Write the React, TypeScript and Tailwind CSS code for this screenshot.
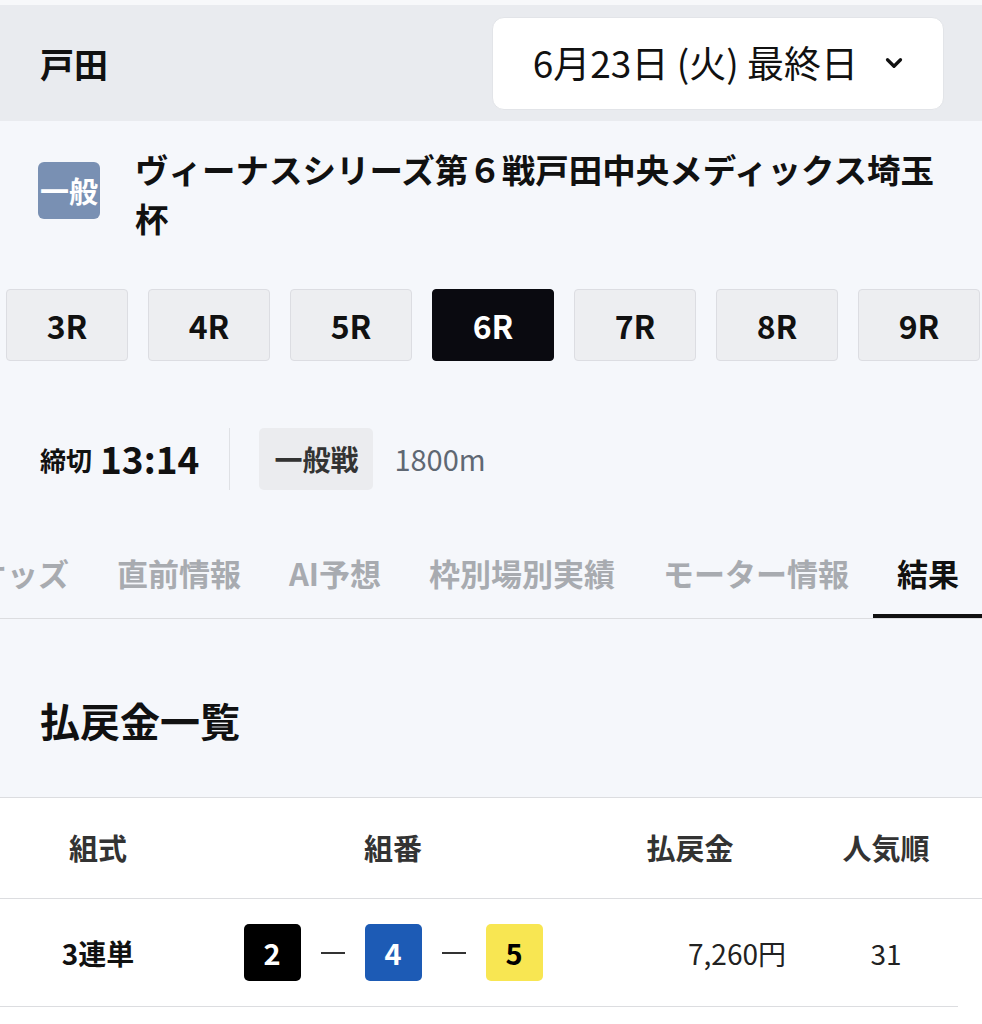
import { ChevronDown } from 'lucide-react'

const font = { fontFamily: '"Noto Sans CJK JP", "Noto Sans", sans-serif' }

const RACES = ['3R', '4R', '5R', '6R', '7R', '8R', '9R']
const TABS = ['オッズ', '直前情報', 'AI予想', '枠別場別実績', 'モーター情報', '結果']

function Boat({ n, cls }: { n: number; cls: string }) {
  return (
    <span className={`flex h-[57px] w-[57px] items-center justify-center rounded-[5px] text-[29px] font-bold ${cls}`}>
      {n}
    </span>
  )
}

function Dash() {
  return <span className="h-[2px] w-[24px] bg-[#333]" />
}

export default function App() {
  return (
    <div style={font} className="min-h-[1024px] w-[982px] overflow-hidden bg-[#f5f7fb] text-[#111]">
      <div className="h-[5px] bg-[#f7f8fa]" />

      <header className="flex h-[116px] items-center justify-between bg-[#e9ebef] pl-[40px] pr-[38px]">
        <h1 className="text-[34px] font-bold">戸田</h1>
        <button className="flex h-[93px] items-center gap-[23px] rounded-[12px] border border-[#e2e4e8] bg-white pl-[40px] pr-[36px] text-[37px]">
          <span>6月23日 (火) 最終日</span>
          <ChevronDown className="h-[26px] w-[26px]" strokeWidth={3} />
        </button>
      </header>

      <div className="flex items-start gap-[35px] pl-[38px] pr-[30px] pt-[23px]">
        <span className="mt-[18px] flex h-[57px] w-[62px] shrink-0 items-center justify-center rounded-[6px] bg-[#7990b3] text-[29px] font-bold leading-none text-white">
          一般
        </span>
        <h2 className="text-[33.5px] font-bold leading-[49px]">
          ヴィーナスシリーズ第６戦戸田中央メディックス埼玉杯
        </h2>
      </div>

      <div className="mt-[47px] flex gap-[20px] pl-[6px]">
        {RACES.map((r) => (
          <div
            key={r}
            className={`flex h-[72px] w-[122px] shrink-0 items-center justify-center rounded-[4px] border text-[32px] font-bold ${
              r === '6R' ? 'border-[#0a0a10] bg-[#0a0a10] text-white' : 'border-[#dcdde2] bg-[#edeef1] text-[#111]'
            }`}
          >
            {r}
          </div>
        ))}
      </div>

      <div className="mt-[67px] flex h-[62px] items-center pl-[40px]">
        <span className="text-[26px] font-bold">締切</span>
        <span className="ml-[8px] text-[37px] font-bold">13:14</span>
        <span className="ml-[30px] h-[62px] w-px bg-[#dfe1e5]" />
        <span className="ml-[29px] flex h-[62px] items-center rounded-[5px] bg-[#ebecef] px-[15px] text-[28px] font-bold text-[#333]">
          一般戦
        </span>
        <span className="ml-[21px] text-[29px] text-[#5f6873]">1800m</span>
      </div>

      <nav className="mt-[40px] flex border-b border-[#dcdde0]">
        <div className="ml-[-48px] flex">
          {TABS.map((t) => (
            <div
              key={t}
              className={`shrink-0 border-b-[4px] px-[24px] pb-[21px] pt-[23px] text-[31px] font-bold leading-[40px] ${
                t === '結果' ? 'border-[#111] text-[#111]' : 'border-transparent text-[#a8abb0]'
              }`}
            >
              {t}
            </div>
          ))}
        </div>
      </nav>

      <h3 className="pb-[49px] pl-[40px] pt-[73px] text-[40px] font-bold leading-[56px]">払戻金一覧</h3>

      <div className="min-h-[240px] border-t border-[#dcdde0] bg-white">
        <div className="grid h-[101px] grid-cols-[196px_394px_200px_1fr] items-center border-b border-[#dcdde0] text-[29px] font-bold text-[#333]">
          <span className="text-center">組式</span>
          <span className="text-center">組番</span>
          <span className="text-center">払戻金</span>
          <span className="text-center">人気順</span>
        </div>
        <div className="mr-[24px] grid h-[108px] grid-cols-[196px_394px_200px_1fr] items-center border-b border-[#dcdde0]">
          <span className="text-center text-[28px] font-bold">3連単</span>
          <div className="flex items-center justify-center gap-[20px]">
            <Boat n={2} cls="bg-black text-white" />
            <Dash />
            <Boat n={4} cls="bg-[#1d5bb5] text-white" />
            <Dash />
            <Boat n={5} cls="bg-[#f8e652] text-black" />
          </div>
          <span className="pr-[4px] text-right text-[28px] text-[#222]">7,260円</span>
          <span className="pl-[24px] text-center text-[28px] text-[#222]">31</span>
        </div>
      </div>
    </div>
  )
}
